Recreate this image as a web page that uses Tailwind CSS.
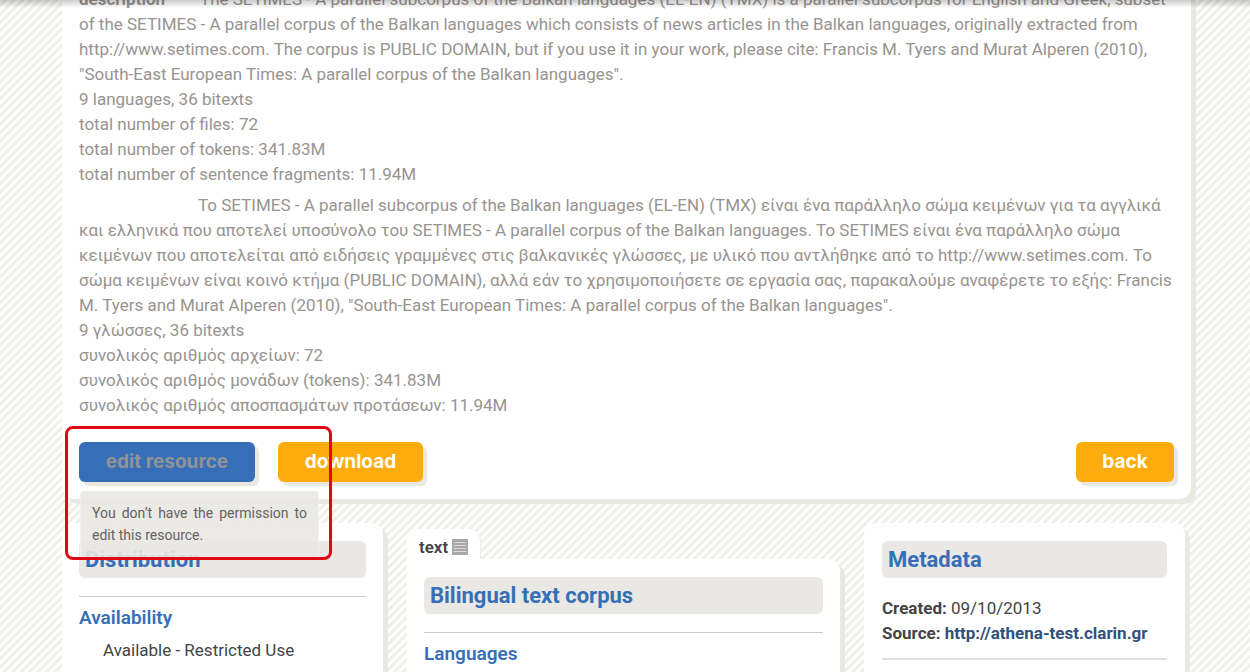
<!DOCTYPE html>
<html lang="en">
<head>
<meta charset="utf-8">
<title>SETIMES resource</title>
<script src="https://cdn.jsdelivr.net/npm/@tailwindcss/browser@4"></script>
</head>
<body class="h-screen overflow-hidden bg-[repeating-linear-gradient(135deg,#ffffff_0px,#ffffff_2px,#efefeb_3px,#efefeb_5px,#ffffff_6px)] font-['Roboto',sans-serif] text-[17px] text-[#444444]">
<div class="pointer-events-none fixed inset-x-0 top-0 z-20 h-2 bg-linear-to-b from-black/20 to-transparent"></div>
<div class="pr-[59px] pl-[62px]">
  <main class="-mt-[13px] rounded-xl bg-white px-[17px] pb-[17px] shadow-[5px_5px_0_#e9e8e3]">
    <p class="whitespace-nowrap text-[17px] leading-[25px] text-[#99938f]"><strong class="inline-block w-[121px] font-bold">description</strong>The SETIMES - A parallel subcorpus of the Balkan languages (EL-EN) (TMX) is a parallel subcorpus for English and Greek, subset<br>of the SETIMES - A parallel corpus of the Balkan languages which consists of news articles in the Balkan languages, originally extracted from<br>http://www.setimes.com. The corpus is PUBLIC DOMAIN, but if you use it in your work, please cite: Francis M. Tyers and Murat Alperen (2010),<br>"South-East European Times: A parallel corpus of the Balkan languages".<br>9 languages, 36 bitexts<br>total number of files: 72<br>total number of tokens: 341.83M<br>total number of sentence fragments: 11.94M</p>
    <p lang="el" class="mt-[6px] whitespace-nowrap indent-[119px] text-[17px] leading-[25px] text-[#99938f]">Το SETIMES - A parallel subcorpus of the Balkan languages (EL-EN) (TMX) είναι ένα παράλληλο σώμα κειμένων για τα αγγλικά<br>και ελληνικά που αποτελεί υποσύνολο του SETIMES - A parallel corpus of the Balkan languages. Το SETIMES είναι ένα παράλληλο σώμα<br>κειμένων που αποτελείται από ειδήσεις γραμμένες στις βαλκανικές γλώσσες, με υλικό που αντλήθηκε από το http://www.setimes.com. Το<br>σώμα κειμένων είναι κοινό κτήμα (PUBLIC DOMAIN), αλλά εάν το χρησιμοποιήσετε σε εργασία σας, παρακαλούμε αναφέρετε το εξής: Francis<br>M. Tyers and Murat Alperen (2010), "South-East European Times: A parallel corpus of the Balkan languages".<br>9 γλώσσες, 36 bitexts<br>συνολικός αριθμός αρχείων: 72<br>συνολικός αριθμός μονάδων (tokens): 341.83M<br>συνολικός αριθμός αποσπασμάτων προτάσεων: 11.94M</p>
    <div class="mt-6 flex items-start gap-[23px] font-['Inter',sans-serif] text-[19px] font-bold text-white">
      <div class="relative">
        <button type="button" aria-describedby="tip" class="h-10 w-[176px] rounded-md bg-[#366fb7] text-[#929397] shadow-[4px_4px_0_#e9e8e3]">edit resource</button>
        <div id="tip" role="tooltip" class="absolute top-[49px] left-px z-10 h-[67px] w-[239px] rounded-sm border border-[#f0f0ec] bg-[#e9e8e3]/90 px-[11px] pt-[10px] text-justify font-['Roboto',sans-serif] text-[14px] leading-[22px] font-normal text-[#66625f]">You don’t have the permission to edit this resource.</div>
        <div class="pointer-events-none absolute -top-4 -left-[14px] z-10 h-[134px] w-[267px] rounded-lg border-3 border-[#e30613]"></div>
      </div>
      <button type="button" class="h-10 w-[145px] rounded-md bg-[#fdac0e] shadow-[4px_4px_0_#e9e8e3]">download</button>
      <button type="button" class="ml-auto h-10 w-[98px] rounded-md bg-[#fdac0e] shadow-[4px_4px_0_#e9e8e3]">back</button>
    </div>
  </main>

  <div class="mt-6 mr-[6px] grid grid-cols-[321fr_433fr_321fr] gap-6">
    <section class="h-50 rounded-xl bg-white px-[17px] pt-[18px] shadow-[5px_5px_0_#e9e8e3]">
      <h2 class="rounded-md bg-[#e9e8e4] px-[6px] text-[22px] leading-[37px] font-bold text-[#366fb7]">Distribution</h2>
      <div class="mt-[18px] border-t border-[#c9c9c9] pt-2">
        <h3 class="text-[19px] leading-[25px] font-semibold text-[#366fb7]">Availability</h3>
        <p class="mt-2 pl-6 leading-[25px]">Available - Restricted Use</p>
      </div>
    </section>
    <section class="pt-[6px]">
      <h4 class="flex h-[30px] w-[74px] items-end gap-1 rounded-t-xl border-r border-[#eeeeea] bg-white pl-3 leading-6 font-semibold">text
        <svg class="mb-1 size-4 shrink-0" viewBox="0 0 16 16" aria-hidden="true"><path fill="#aaa8a6" d="M0 0h16v16H0z"/><path stroke="#dddbd9" d="M2 3.500h12M2 6.500h12M2 9.500h12M2 12.500h12"/></svg>
      </h4>
      <div class="h-41 rounded-tr-xl bg-white px-[17px] pt-[18px] shadow-[5px_5px_0_#e9e8e3]">
        <h2 class="rounded-md bg-[#e9e8e4] px-[6px] text-[22px] leading-[37px] font-bold text-[#366fb7]">Bilingual text corpus</h2>
        <div class="mt-[18px] border-t border-[#c9c9c9] pt-2">
          <h3 class="text-[19px] leading-[25px] font-semibold text-[#366fb7]">Languages</h3>
        </div>
      </div>
    </section>
    <section class="h-50 rounded-xl bg-white px-[18px] pt-[18px] shadow-[5px_5px_0_#e9e8e3]">
      <h2 class="rounded-md bg-[#e9e8e4] px-[6px] text-[22px] leading-[37px] font-bold text-[#366fb7]">Metadata</h2>
      <p class="mt-[18px] border-b-2 border-[#e0e0e0] pb-3 text-[17px] leading-[25px] whitespace-nowrap"><strong>Created:</strong> 09/10/2013<br><strong>Source:</strong> <a href="http://athena-test.clarin.gr" class="font-bold text-[#30527a]">http://athena-test.clarin.gr</a></p>
    </section>
  </div>
</div>
</body>
</html>
